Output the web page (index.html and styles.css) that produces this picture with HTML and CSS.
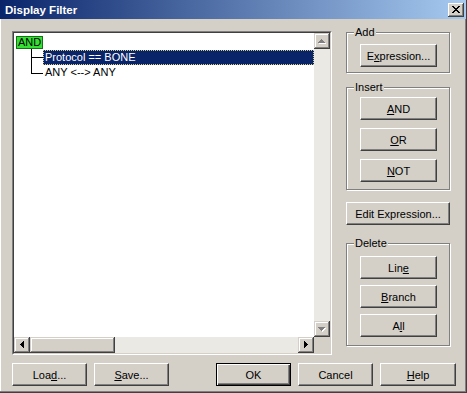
FILE: index.html
```html
<!DOCTYPE html>
<html>
<head>
<meta charset="utf-8">
<title>Display Filter</title>
<link rel="stylesheet" href="styles.css">
</head>
<body>
<div class="window">
  <div class="titlebar">
    <span class="title">Display Filter</span>
    <div class="close">
      <svg width="16" height="14" viewBox="0 0 16 14"><path fill="#000" d="M4 3h2v1h-2z M10 3h2v1h-2z M5 4h2v1h-2z M9 4h2v1h-2z M6 5h4v1h-4z M7 6h2v1h-2z M6 7h4v1h-4z M5 8h2v1h-2z M9 8h2v1h-2z M4 9h2v1h-2z M10 9h2v1h-2z"/></svg>
    </div>
  </div>
  <div class="body">
    <div class="main">
      <div class="listbox">
        <div class="listbox-inner">
          <div class="tree">
            <div class="root"><span class="and-box">AND</span></div>
            <div class="children">
              <div class="child">
                <span class="conn"><i class="conn-top"></i><i class="conn-bot"></i></span>
                <span class="label selected">Protocol == BONE</span>
              </div>
              <div class="child last">
                <span class="conn"><i class="conn-top"></i><i class="conn-bot"></i></span>
                <span class="label">ANY &lt;--&gt; ANY</span>
              </div>
            </div>
          </div>
          <div class="vscroll">
            <div class="sbtn"><svg width="16" height="16" viewBox="0 0 16 16"><path fill="#fff" d="M8 7h1v1h1v1h1v1h1v1h-7v-1h1v-1h1v-1h1z"/><path fill="#808080" d="M7 6h1v1h1v1h1v1h1v1h-7v-1h1v-1h1v-1h1z"/></svg></div>
            <div class="track"></div>
            <div class="sbtn"><svg width="16" height="16" viewBox="0 0 16 16"><path fill="#fff" d="M5 7h7v1h-1v1h-1v1h-1v1h-1v-1h-1v-1h-1v-1h-1z"/><path fill="#808080" d="M4 6h7v1h-1v1h-1v1h-1v1h-1v-1h-1v-1h-1v-1h-1z"/></svg></div>
          </div>
          <div class="hscroll">
            <div class="sbtn"><svg width="16" height="16" viewBox="0 0 16 16"><path fill="#000" d="M6 7h1v-1h1v-1h1v-1h1v7h-1v-1h-1v-1h-1v-1h-1z"/></svg></div>
            <div class="thumb"></div>
            <div class="track"></div>
            <div class="sbtn"><svg width="16" height="16" viewBox="0 0 16 16"><path fill="#000" d="M6 4h1v1h1v1h1v1h1v1h-1v1h-1v1h-1v1h-1z"/></svg></div>
          </div>
          <div class="corner"></div>
        </div>
      </div>
      <div class="side">
        <div class="group group-add">
          <span class="group-label">Add</span>
          <button class="btn">E<u>x</u>pression...</button>
        </div>
        <div class="group group-insert">
          <span class="group-label">Insert</span>
          <button class="btn"><u>A</u>ND</button>
          <button class="btn"><u>O</u>R</button>
          <button class="btn"><u>N</u>OT</button>
        </div>
        <button class="btn btn-edit">Edit Expression...</button>
        <div class="group group-delete">
          <span class="group-label">Delete</span>
          <button class="btn">Lin<u>e</u></button>
          <button class="btn"><u>B</u>ranch</button>
          <button class="btn">A<u>l</u>l</button>
        </div>
      </div>
    </div>
    <div class="footer">
      <button class="btn btn-foot">Loa<u>d</u>...</button>
      <button class="btn btn-foot"><u>S</u>ave...</button>
      <button class="btn btn-foot btn-default btn-ok">OK</button>
      <button class="btn btn-foot">Cancel</button>
      <button class="btn btn-foot btn-help"><u>H</u>elp</button>
    </div>
  </div>
</div>
</body>
</html>
```

FILE: styles.css
```css
body {
  margin: 0;
  background: #d4d0c8;
  font-family: "Liberation Sans", Arial, sans-serif;
  font-size: 11px;
}

.window {
  width: 467px;
  height: 393px;
  box-sizing: border-box;
  background: #d4d0c8;
  border-right: 1px solid #404040;
  border-bottom: 1px solid #404040;
  box-shadow: inset -1px -1px #808080, inset 1px 0 #fff;
  display: flex;
  flex-direction: column;
}

.titlebar {
  flex: none;
  height: 19px;
  background: linear-gradient(to right, #0a246a, #a6caf0);
  display: flex;
  align-items: center;
  justify-content: space-between;
  padding: 0 2px 0 5px;
}

.title {
  color: #fff;
  font-weight: bold;
  font-size: 11.5px;
}

.close {
  width: 16px;
  height: 14px;
  background: #d4d0c8;
  box-shadow: inset -1px -1px #404040, inset 1px 1px #fff, inset -2px -2px #808080;
}

.close svg { display: block; }

.body {
  padding: 12px 0 0 12px;
}

.main {
  display: flex;
  height: 324px;
}

.listbox {
  width: 320px;
  height: 324px;
  box-sizing: border-box;
  border: 1px solid;
  border-color: #808080 #fff #fff #808080;
}

.listbox-inner {
  height: 100%;
  box-sizing: border-box;
  border: 1px solid;
  border-color: #404040 #d4d0c8 #d4d0c8 #404040;
  background: #fff;
  display: grid;
  grid-template-columns: 1fr 16px;
  grid-template-rows: 1fr 16px;
}

.tree {
  padding: 3px 0 0 2px;
  overflow: hidden;
  min-width: 0;
}

.root { display: flex; }

.and-box {
  display: block;
  width: 27px;
  height: 13px;
  box-sizing: border-box;
  border: 1px solid #167016;
  background: #33e033;
  color: #000;
  line-height: 11px;
  text-align: center;
}

.children {
  margin-left: 15px;
}

.child {
  display: flex;
  height: 16px;
}

.conn {
  width: 12px;
  flex: none;
  display: flex;
  flex-direction: column;
}

.conn i { display: block; }

.conn-top {
  height: 9px;
  box-sizing: border-box;
  border-left: 1px solid #000;
  border-bottom: 1px solid #000;
}

.conn-bot {
  flex: 1;
  border-left: 1px solid #000;
}

.last .conn-bot { border-left: none; }

.label {
  height: 15px;
  box-sizing: border-box;
  border: 1px solid transparent;
  padding: 0 1px;
  line-height: 13px;
  white-space: nowrap;
  color: #000;
}

.selected {
  flex: 1;
  margin-top: 1px;
  background: #0a246a;
  color: #fff;
  border: 1px dotted #d8d080;
}

.vscroll {
  display: flex;
  flex-direction: column;
}

.hscroll {
  display: flex;
}

.sbtn {
  flex: none;
  width: 16px;
  height: 16px;
  background: #d4d0c8;
  box-shadow: inset -1px -1px #404040, inset 1px 1px #d4d0c8, inset -2px -2px #808080, inset 2px 2px #fff;
}

.sbtn svg { display: block; }

.thumb {
  flex: none;
  width: 85px;
  height: 16px;
  background: #d4d0c8;
  box-shadow: inset -1px -1px #404040, inset 1px 1px #d4d0c8, inset -2px -2px #808080, inset 2px 2px #fff;
}

.track {
  flex: 1;
  background: #ebe9e4;
}

.corner {
  background: #d4d0c8;
}

.side {
  width: 104px;
  margin-left: 14px;
  display: flex;
  flex-direction: column;
}

.group {
  position: relative;
  border: 1px solid #808080;
  box-shadow: inset 1px 1px #fff, 1px 1px #fff;
  display: flex;
  flex-direction: column;
  padding: 0 12px 0 13px;
}

.group-label {
  position: absolute;
  top: -7px;
  left: 7px;
  padding: 0 1px;
  line-height: 13px;
  background: #d4d0c8;
  color: #000;
}

.group-add {
  margin-top: 1px;
  padding-top: 11px;
  padding-bottom: 5px;
}

.group-insert {
  margin-top: 14px;
  padding-top: 9px;
  padding-bottom: 7px;
  gap: 8px;
}

.group-delete {
  margin-top: 18px;
  padding-top: 12px;
  padding-bottom: 8px;
  gap: 6px;
}

.btn {
  box-sizing: border-box;
  height: 23px;
  margin: 0;
  padding: 0;
  background: #d4d0c8;
  border: 1px solid;
  border-color: #fff #404040 #404040 #fff;
  border-radius: 0;
  box-shadow: inset -1px -1px #808080;
  font-family: "Liberation Sans", Arial, sans-serif;
  font-size: 11px;
  color: #000;
  display: flex;
  align-items: center;
  justify-content: center;
  white-space: nowrap;
}

.btn-edit {
  margin-top: 12px;
  width: 104px;
}

.footer {
  display: flex;
  gap: 7px;
  margin-top: 8px;
}

.btn-foot { width: 75px; }

.btn-ok { margin-left: 40px; }

.btn-help { width: 76px; }

.btn-default {
  border-color: #000;
  box-shadow: inset 1px 1px #fff, inset -1px -1px #404040, inset -2px -2px #808080;
}
```
